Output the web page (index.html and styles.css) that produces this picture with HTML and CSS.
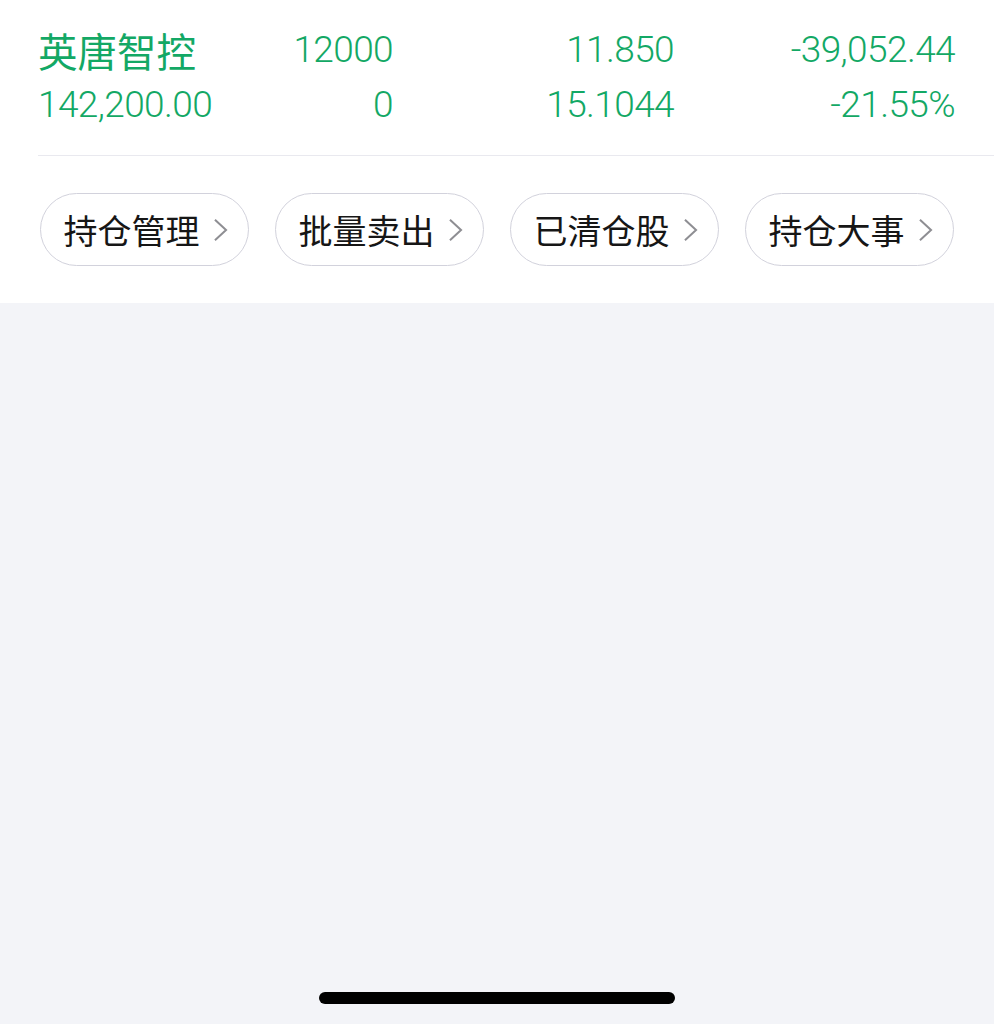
FILE: index.html
```html
<!DOCTYPE html>
<html lang="zh-CN">
<head>
    <meta charset="UTF-8">
    <meta name="viewport" content="width=device-width, initial-scale=1.0">
    <title>持仓</title>
    <link rel="stylesheet" href="styles.css">
</head>
<body>
    <div class="holding">
        <div class="holding-grid">
            <div class="cell name">英唐智控</div>
            <div class="cell num">12000</div>
            <div class="cell num">11.850</div>
            <div class="cell num">-39,052.44</div>
            <div class="cell left">142,200.00</div>
            <div class="cell num">0</div>
            <div class="cell num">15.1044</div>
            <div class="cell num">-21.55%</div>
        </div>
        <div class="divider"></div>
        <div class="actions">
            <a class="pill" href="#">持仓管理<svg class="chev" viewBox="0 0 16 26"><path d="M2 2 L14 13 L2 24"/></svg></a>
            <a class="pill" href="#">批量卖出<svg class="chev" viewBox="0 0 16 26"><path d="M2 2 L14 13 L2 24"/></svg></a>
            <a class="pill" href="#">已清仓股<svg class="chev" viewBox="0 0 16 26"><path d="M2 2 L14 13 L2 24"/></svg></a>
            <a class="pill" href="#">持仓大事<svg class="chev" viewBox="0 0 16 26"><path d="M2 2 L14 13 L2 24"/></svg></a>
        </div>
    </div>
    <div class="rest">
        <div class="home-bar"></div>
    </div>
</body>
</html>
```
FILE: styles.css
```css
/* 基础 */
html, body {
    margin: 0;
    padding: 0;
    height: 100%;
}
body {
    display: flex;
    flex-direction: column;
    font-family: Roboto, "Noto Sans CJK SC", sans-serif;
    background-color: #f3f4f8;
}

/* 持仓行 */
.holding {
    background-color: #fff;
    padding: 22px 0 37px 0;
}
.holding-grid {
    display: grid;
    grid-template-columns: 177px 178px 1fr 1fr;
    padding: 0 39px 0 38px;
    color: #13a865;
    font-size: 37px;
    font-weight: 350;
    line-height: 55px;
}
.cell {
    white-space: nowrap;
    letter-spacing: -0.6px;
}
.num {
    text-align: right;
}
.name {
    font-family: "Noto Sans CJK SC", sans-serif;
    font-size: 39.5px;
    font-weight: 400;
    letter-spacing: 0;
}
.divider {
    height: 1px;
    background-color: #e9e9ef;
    margin: 23px 0 0 38px;
}

/* 按钮 */
.actions {
    display: flex;
    gap: 26px;
    padding: 37px 0 0 40px;
}
.pill {
    box-sizing: border-box;
    width: 209px;
    height: 73px;
    border: 1.5px solid #d2d2dc;
    border-radius: 37px;
    display: flex;
    align-items: center;
    justify-content: center;
    gap: 13px;
    font-family: "Noto Sans CJK SC", sans-serif;
    font-size: 34px;
    color: #161616;
    text-decoration: none;
    padding-left: 2px;
}
.chev {
    width: 15px;
    height: 24px;
    fill: none;
    stroke: #8e8e93;
    stroke-width: 2.2;
}

/* 底部 */
.rest {
    flex: 1;
    display: flex;
    justify-content: center;
    align-items: flex-end;
}
.home-bar {
    width: 356px;
    height: 12px;
    border-radius: 6px;
    background-color: #000;
    margin: 0 0 20px 0;
}
```
